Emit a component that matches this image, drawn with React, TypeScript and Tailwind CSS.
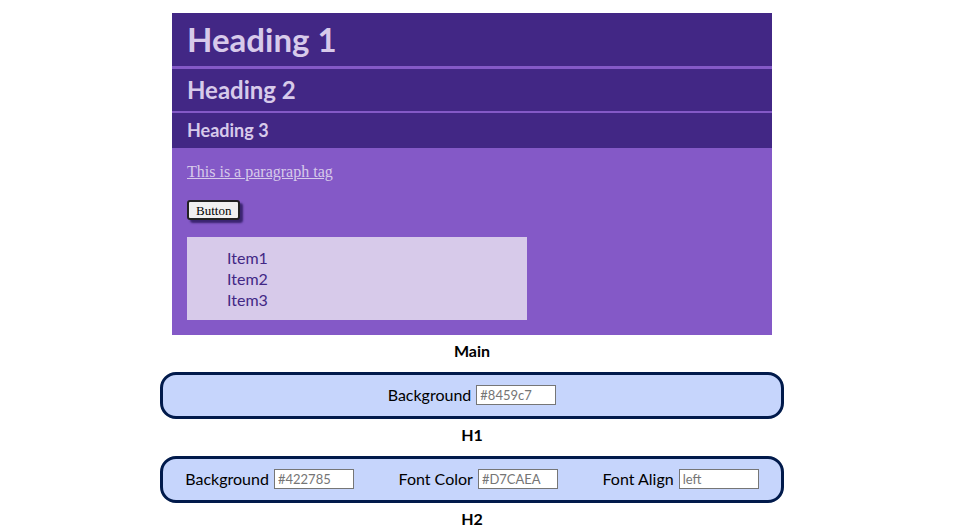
import React from "react";

const sans = "font-['Lato','Open_Sans',sans-serif]";

const Field: React.FC<{ label: string; placeholder: string }> = ({
  label,
  placeholder,
}) => (
  <div className="flex items-center gap-[5px]">
    <span className="text-[16px] text-black">{label}</span>
    <input
      type="text"
      placeholder={placeholder}
      className="w-[80px] h-[20px] px-[3px] border border-[#767676] bg-white text-[13px] placeholder:text-[#757575] outline-none"
    />
  </div>
);

const Label: React.FC<{ children: React.ReactNode }> = ({ children }) => (
  <div className="pt-[4px] pb-[9px] leading-[24px] text-center font-bold text-[16px] text-black">
    {children}
  </div>
);

export default function App() {
  return (
    <div className={`w-[624px] ml-[160px] pt-[13px] ${sans}`}>
      {/* preview */}
      <div className="mx-[12px] bg-[#8459c7]">
        <h1 className="h-[53px] mb-[3px] bg-[#422785] px-[15px] flex items-center text-[33px] font-bold text-[#D7CAEA]">
          Heading 1
        </h1>
        <h2 className="h-[42px] mb-[2px] bg-[#422785] px-[15px] flex items-center text-[24px] font-bold text-[#D7CAEA]">
          Heading 2
        </h2>
        <h3 className="h-[35px] bg-[#422785] px-[15px] flex items-center text-[18px] font-bold text-[#D7CAEA]">
          Heading 3
        </h3>
        <div className="p-[15px]">
          <p className="font-['Liberation_Serif',serif] text-[16px] leading-[18px] underline text-[#D7CAEA]">
            This is a paragraph tag
          </p>
          <button className="mt-[19px] h-[20px] px-[7px] bg-[#f0f0f0] border-2 border-[#222] rounded-[3px] shadow-[3px_3px_2px_#3a2470] font-['Liberation_Serif',serif] text-[13px] leading-none text-black">
            Button
          </button>
          <ul className="mt-[16px] w-[340px] bg-[#D7CAEA] py-[10px] pl-[40px] text-[16px] leading-[21px] text-[#422785]">
            <li>Item1</li>
            <li>Item2</li>
            <li>Item3</li>
          </ul>
        </div>
      </div>

      <Label>Main</Label>
      <div className="h-[47px] border-[3px] border-[#011a4b] rounded-[16px] bg-[#c6d5fc] flex items-center justify-center">
        <Field label="Background" placeholder="#8459c7" />
      </div>

      <Label>H1</Label>
      <div className="h-[47px] border-[3px] border-[#011a4b] rounded-[16px] bg-[#c6d5fc] flex items-center justify-around">
        <Field label="Background" placeholder="#422785" />
        <Field label="Font Color" placeholder="#D7CAEA" />
        <Field label="Font Align" placeholder="left" />
      </div>

      <Label>H2</Label>
    </div>
  );
}
